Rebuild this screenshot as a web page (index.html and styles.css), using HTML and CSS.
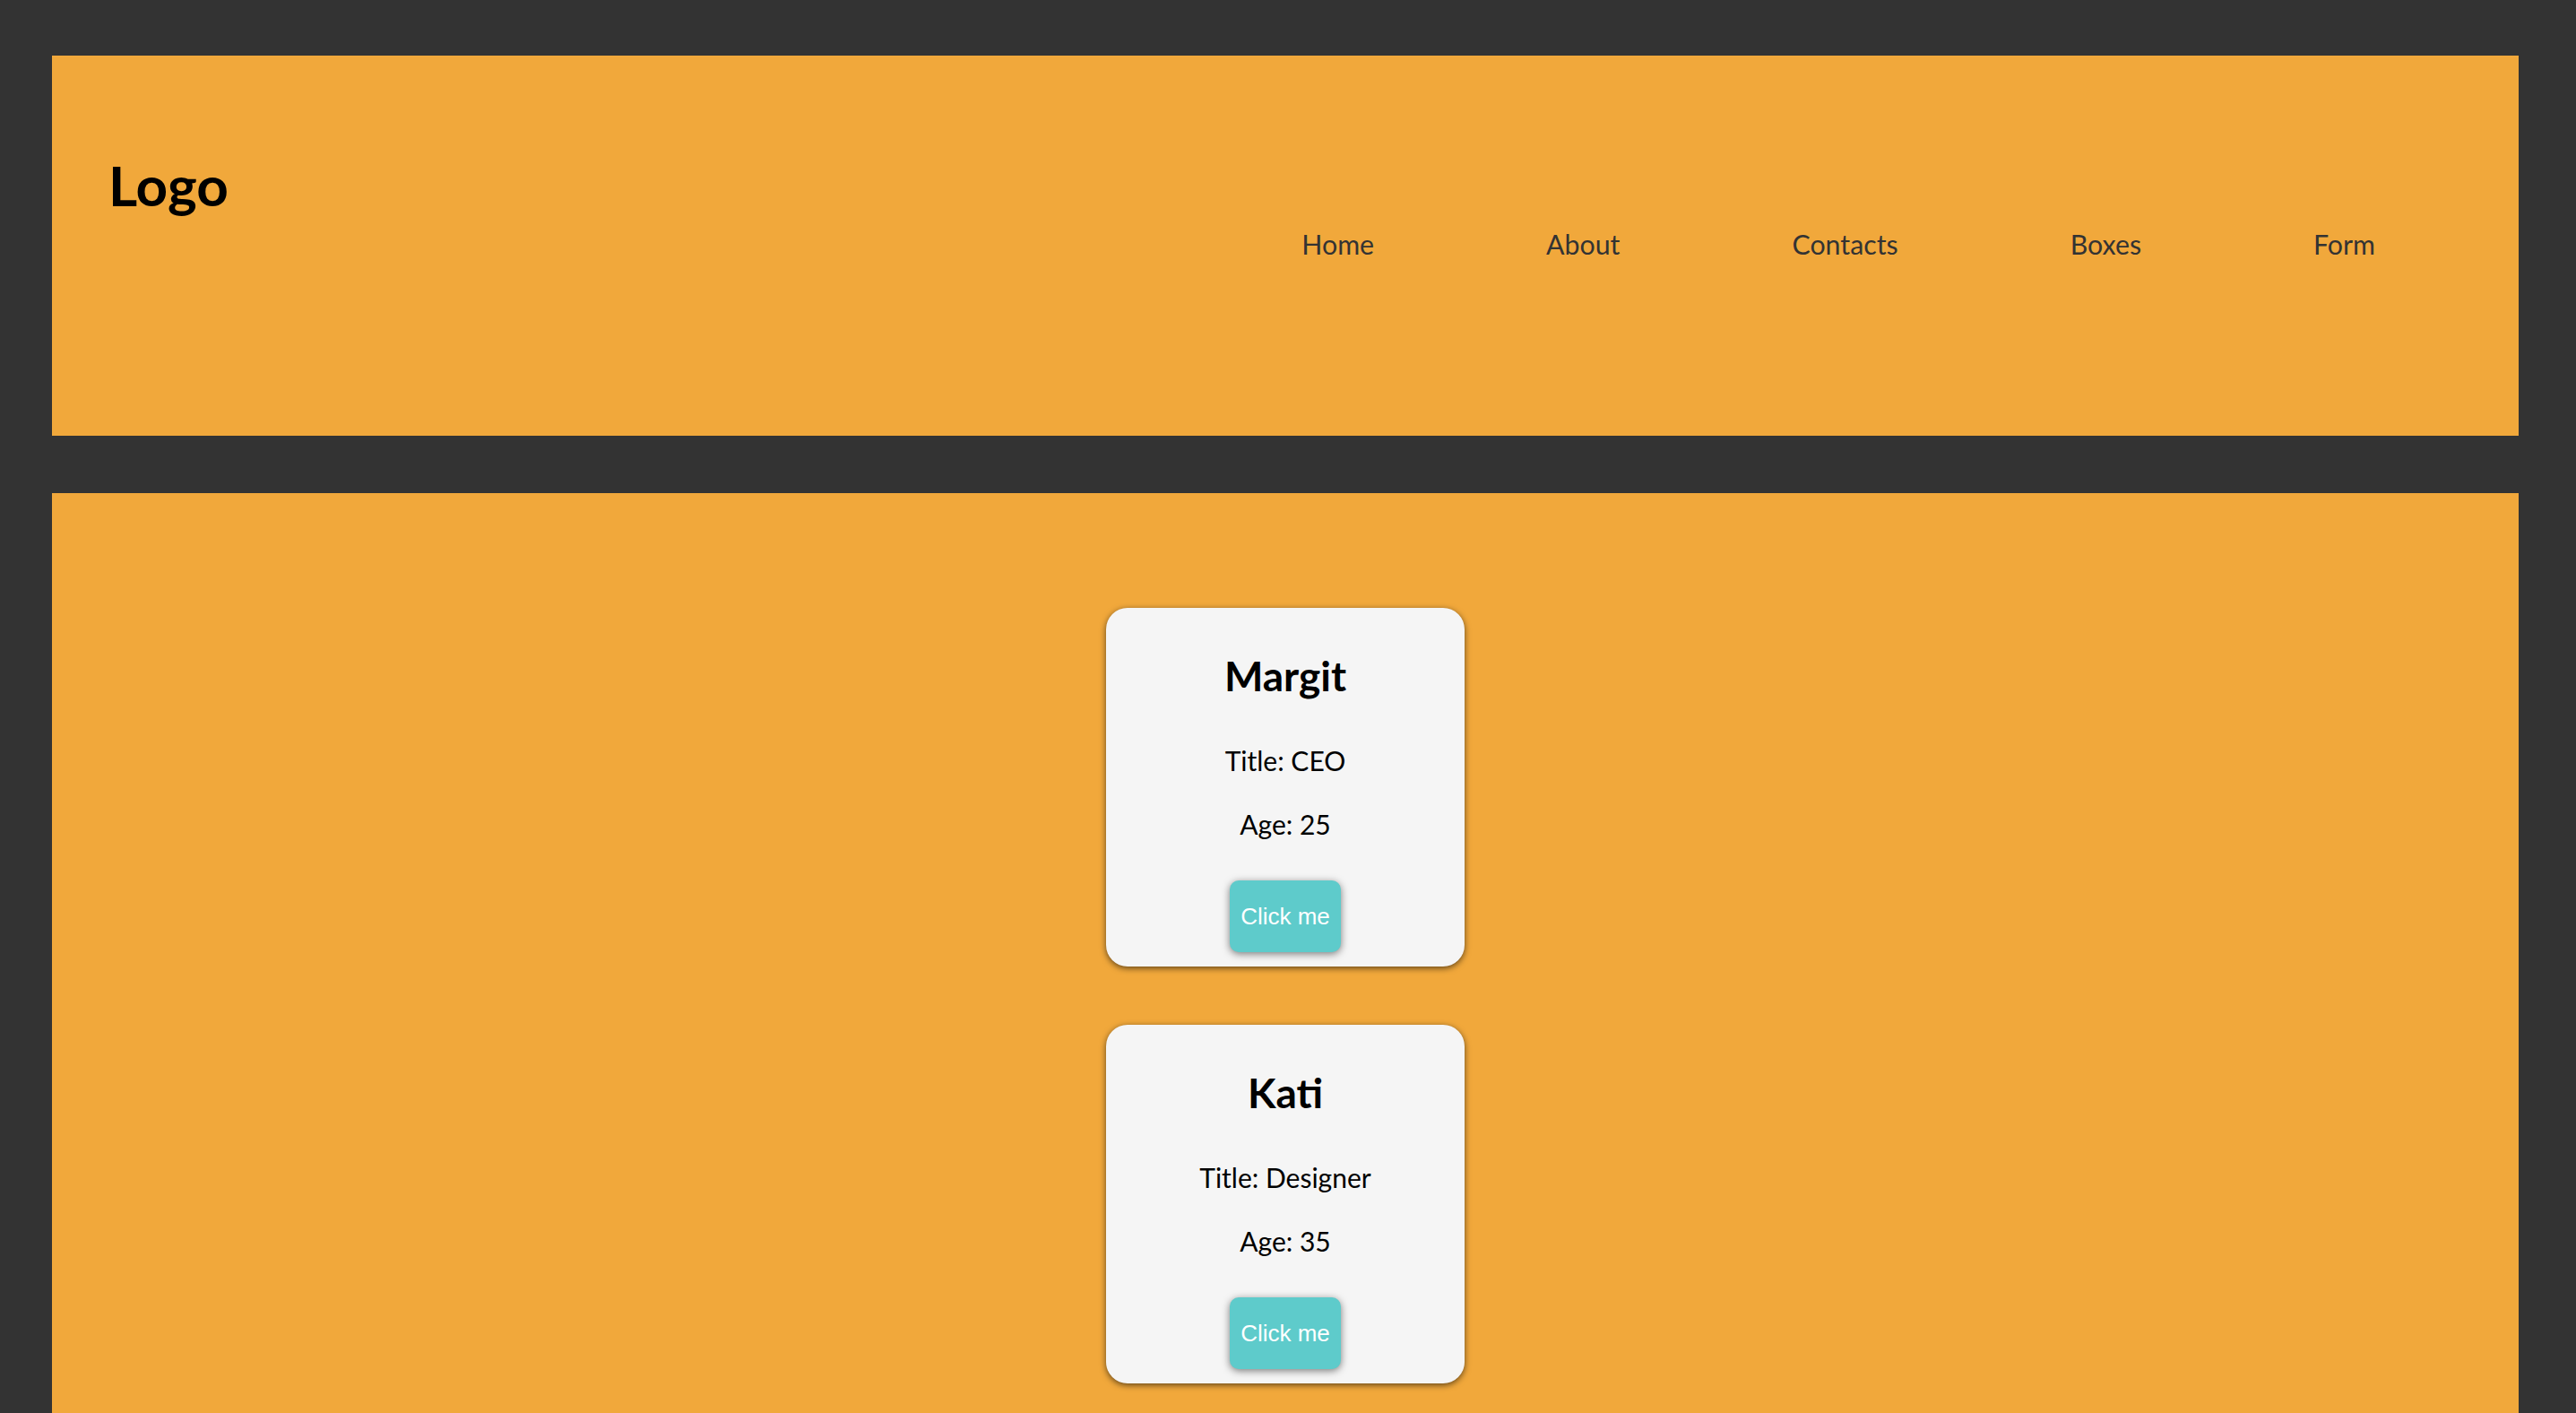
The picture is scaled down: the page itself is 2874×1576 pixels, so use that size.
FILE: index.html
```html
<!DOCTYPE html>
<html lang="en">
<head>
<meta charset="utf-8">
<title>Cards</title>
<link rel="stylesheet" href="styles.css">
</head>
<body>
<header class="site-header">
  <div class="logo">Logo</div>
  <nav class="nav">
    <ul class="nav-list">
      <li class="nav-item"><a class="nav-link" href="#">Home</a></li>
      <li class="nav-item"><a class="nav-link" href="#">About</a></li>
      <li class="nav-item"><a class="nav-link" href="#">Contacts</a></li>
      <li class="nav-item"><a class="nav-link" href="#">Boxes</a></li>
      <li class="nav-item"><a class="nav-link" href="#">Form</a></li>
    </ul>
  </nav>
</header>
<main class="content">
  <div class="card">
    <h2 class="card-name">Margit</h2>
    <p class="card-title">Title: CEO</p>
    <p class="card-age">Age: 25</p>
    <button class="card-btn">Click me</button>
  </div>
  <div class="card">
    <h2 class="card-name">Kati</h2>
    <p class="card-title">Title: Designer</p>
    <p class="card-age">Age: 35</p>
    <button class="card-btn">Click me</button>
  </div>
</main>
</body>
</html>
```

FILE: styles.css
```css
* {
  box-sizing: border-box;
}

html, body {
  margin: 0;
  padding: 0;
}

body {
  background: #333333;
  padding: 62px 64px 0 58px;
  font-family: Lato, "Open Sans", sans-serif;
  color: #000;
}

.site-header {
  background: #f1a83b;
  height: 424px;
  display: flex;
  justify-content: space-between;
  align-items: flex-start;
  padding: 0 64px 0 63px;
}

.logo {
  font-size: 62px;
  font-weight: 700;
  line-height: 1;
  margin-top: 113px;
}

.nav {
  margin-top: 195px;
}

.nav-list {
  list-style: none;
  margin: 0;
  padding: 0;
  display: flex;
}

.nav-item {
  padding: 0 96px;
}

.nav-link {
  color: #333333;
  text-decoration: none;
  font-size: 30.3px;
  line-height: 1;
  display: block;
}

.content {
  background: #f1a83b;
  margin-top: 64px;
  padding: 128px 0 128px;
  display: flex;
  flex-direction: column;
  align-items: center;
  gap: 65px;
}

.card {
  width: 400px;
  height: 400px;
  background: #f5f5f5;
  border-radius: 24px;
  box-shadow: 0 2px 7px rgba(0, 0, 0, 0.6);
  display: flex;
  flex-direction: column;
  align-items: center;
  padding-top: 53px;
}

.card-name {
  margin: 0;
  font-size: 46px;
  font-weight: 700;
  line-height: 1;
}

.card-title,
.card-age {
  margin: 0;
  font-size: 30px;
  line-height: 1;
}

.card-title {
  margin-top: 56px;
}

.card-age {
  margin-top: 41px;
}

.card-btn {
  margin-top: 48px;
  width: 124px;
  height: 80px;
  border: none;
  border-radius: 10px;
  background: #5ecbcb;
  color: #ffffff;
  font-family: "Liberation Sans", Arial, sans-serif;
  font-size: 26px;
  padding: 0;
  box-shadow: 0 2px 9px rgba(0, 0, 0, 0.5);
}
```
